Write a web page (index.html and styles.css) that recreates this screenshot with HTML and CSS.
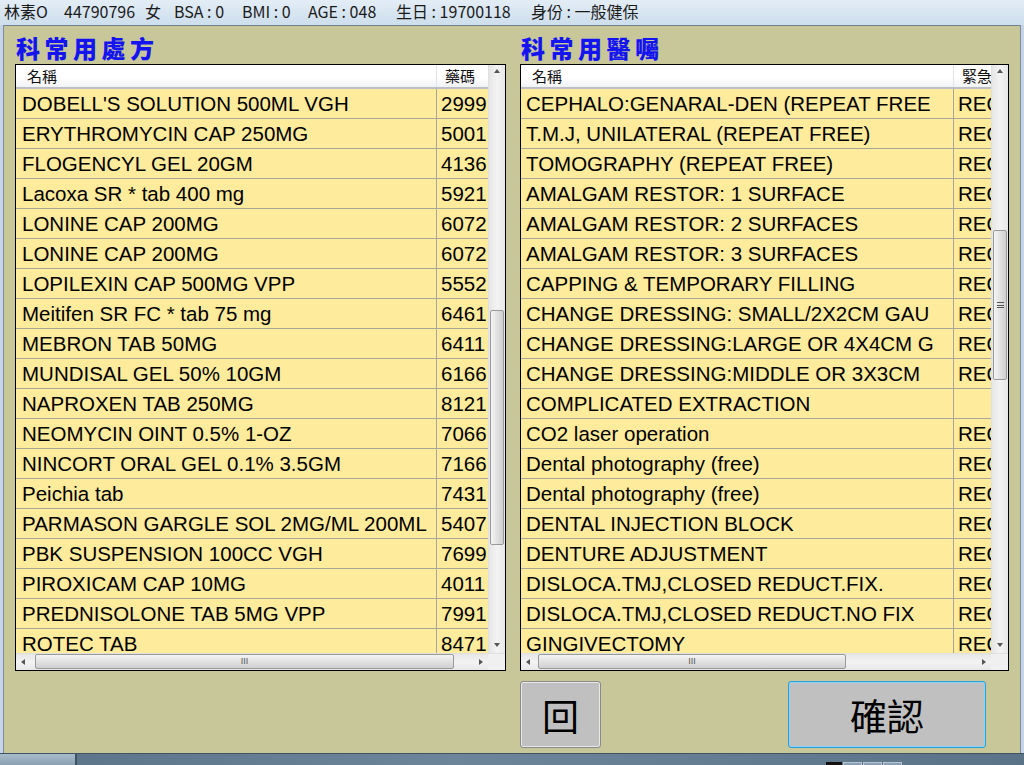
FILE: index.html
```html
<!DOCTYPE html>
<html lang="zh-Hant">
<head>
<meta charset="utf-8">
<title>科常用處方</title>
<link rel="stylesheet" href="styles.css">
</head>
<body>
<div class="topbar">
  <span class="seg s1">林素O</span>
  <span class="seg s2">44790796</span>
  <span class="seg s3">女</span>
  <span class="seg s4">BSA : 0</span>
  <span class="seg s5">BMI : 0</span>
  <span class="seg s6">AGE : 048</span>
  <span class="seg s7">生日 : 19700118</span>
  <span class="seg s8">身份 : 一般健保</span>
</div>
<div class="window">
  <div class="panels">
    <section class="panel panel-left">
      <h2 class="title">科常用處方</h2>
      <div class="listbox">
        <div class="list-main">
          <div class="grid grid-left">
            <div class="hdr"><div class="c1">名稱</div><div class="c2">藥碼</div></div>
            <div class="row"><div class="c1">DOBELL'S SOLUTION 500ML VGH</div><div class="c2">2999</div></div>
            <div class="row"><div class="c1">ERYTHROMYCIN CAP 250MG</div><div class="c2">5001</div></div>
            <div class="row"><div class="c1">FLOGENCYL GEL 20GM</div><div class="c2">4136</div></div>
            <div class="row"><div class="c1">Lacoxa SR * tab 400 mg</div><div class="c2">5921</div></div>
            <div class="row"><div class="c1">LONINE CAP 200MG</div><div class="c2">6072</div></div>
            <div class="row"><div class="c1">LONINE CAP 200MG</div><div class="c2">6072</div></div>
            <div class="row"><div class="c1">LOPILEXIN CAP 500MG VPP</div><div class="c2">5552</div></div>
            <div class="row"><div class="c1">Meitifen SR FC * tab 75 mg</div><div class="c2">6461</div></div>
            <div class="row"><div class="c1">MEBRON TAB 50MG</div><div class="c2">6411</div></div>
            <div class="row"><div class="c1">MUNDISAL GEL 50% 10GM</div><div class="c2">6166</div></div>
            <div class="row"><div class="c1">NAPROXEN TAB 250MG</div><div class="c2">8121</div></div>
            <div class="row"><div class="c1">NEOMYCIN OINT 0.5% 1-OZ</div><div class="c2">7066</div></div>
            <div class="row"><div class="c1">NINCORT ORAL GEL 0.1% 3.5GM</div><div class="c2">7166</div></div>
            <div class="row"><div class="c1">Peichia tab</div><div class="c2">7431</div></div>
            <div class="row"><div class="c1">PARMASON GARGLE SOL 2MG/ML 200ML</div><div class="c2">5407</div></div>
            <div class="row"><div class="c1">PBK SUSPENSION 100CC VGH</div><div class="c2">7699</div></div>
            <div class="row"><div class="c1">PIROXICAM CAP 10MG</div><div class="c2">4011</div></div>
            <div class="row"><div class="c1">PREDNISOLONE TAB 5MG VPP</div><div class="c2">7991</div></div>
            <div class="row"><div class="c1">ROTEC TAB</div><div class="c2">8471</div></div>
          </div>
          <div class="vscroll">
            <div class="arrow up"></div>
            <div class="vtrack"><div class="vthumb vthumb-left"></div></div>
            <div class="arrow down"></div>
          </div>
        </div>
        <div class="hscroll">
          <div class="arrow left"></div>
          <div class="htrack"><div class="hthumb hthumb-left"><span class="grip">III</span></div></div>
          <div class="arrow right"></div>
          <div class="corner"></div>
        </div>
      </div>
    </section>
    <section class="panel panel-right">
      <h2 class="title">科常用醫囑</h2>
      <div class="listbox">
        <div class="list-main">
          <div class="grid grid-right">
            <div class="hdr"><div class="c1">名稱</div><div class="c2">緊急</div></div>
            <div class="row"><div class="c1">CEPHALO:GENARAL-DEN (REPEAT FREE</div><div class="c2">REQ</div></div>
            <div class="row"><div class="c1">T.M.J, UNILATERAL (REPEAT FREE)</div><div class="c2">REQ</div></div>
            <div class="row"><div class="c1">TOMOGRAPHY (REPEAT FREE)</div><div class="c2">REQ</div></div>
            <div class="row"><div class="c1">AMALGAM RESTOR: 1 SURFACE</div><div class="c2">REQ</div></div>
            <div class="row"><div class="c1">AMALGAM RESTOR: 2 SURFACES</div><div class="c2">REQ</div></div>
            <div class="row"><div class="c1">AMALGAM RESTOR: 3 SURFACES</div><div class="c2">REQ</div></div>
            <div class="row"><div class="c1">CAPPING &amp; TEMPORARY FILLING</div><div class="c2">REQ</div></div>
            <div class="row"><div class="c1">CHANGE DRESSING: SMALL/2X2CM GAU</div><div class="c2">REQ</div></div>
            <div class="row"><div class="c1">CHANGE DRESSING:LARGE OR 4X4CM G</div><div class="c2">REQ</div></div>
            <div class="row"><div class="c1">CHANGE DRESSING:MIDDLE OR 3X3CM</div><div class="c2">REQ</div></div>
            <div class="row"><div class="c1">COMPLICATED EXTRACTION</div><div class="c2"></div></div>
            <div class="row"><div class="c1">CO2 laser operation</div><div class="c2">REQ</div></div>
            <div class="row"><div class="c1">Dental photography (free)</div><div class="c2">REQ</div></div>
            <div class="row"><div class="c1">Dental photography (free)</div><div class="c2">REQ</div></div>
            <div class="row"><div class="c1">DENTAL INJECTION BLOCK</div><div class="c2">REQ</div></div>
            <div class="row"><div class="c1">DENTURE ADJUSTMENT</div><div class="c2">REQ</div></div>
            <div class="row"><div class="c1">DISLOCA.TMJ,CLOSED REDUCT.FIX.</div><div class="c2">REQ</div></div>
            <div class="row"><div class="c1">DISLOCA.TMJ,CLOSED REDUCT.NO FIX</div><div class="c2">REQ</div></div>
            <div class="row"><div class="c1">GINGIVECTOMY</div><div class="c2">REQ</div></div>
          </div>
          <div class="vscroll">
            <div class="arrow up"></div>
            <div class="vtrack"><div class="vthumb vthumb-right"><span class="vgrip"></span></div></div>
            <div class="arrow down"></div>
          </div>
        </div>
        <div class="hscroll">
          <div class="arrow left"></div>
          <div class="htrack"><div class="hthumb hthumb-right"><span class="grip">III</span></div></div>
          <div class="arrow right"></div>
          <div class="corner"></div>
        </div>
      </div>
      <div class="buttons">
        <button class="btn btn-back">回</button>
        <button class="btn btn-ok">確認</button>
      </div>
    </section>
  </div>
</div>
<div class="taskbar">
  <div class="task-start"></div>
  <div class="task-main">
    <div class="tray">
      <span class="tray-sq dark"></span><span class="tray-sq"></span><span class="tray-sq"></span><span class="tray-sq"></span>
    </div>
  </div>
</div>
</body>
</html>
```

FILE: styles.css
```css
* { box-sizing: border-box; }
html, body { margin: 0; padding: 0; }
body {
  width: 1024px;
  height: 765px;
  overflow: hidden;
  background: #c4d6e6;
  font-family: "Liberation Sans", Arial, sans-serif;
}
.topbar {
  height: 25px;
  padding: 0 0 0 4px;
  display: flex;
  white-space: pre;
  font-family: "Noto Sans CJK TC", "Liberation Sans", sans-serif;
  font-size: 16px;
  line-height: 22px;
  color: #1a1a1a;
  background: linear-gradient(#e3edf6, #cddeec);
}
.seg { flex: none; }
.s1 { width: 60px; }
.s2 { width: 81px; }
.s3 { width: 29px; }
.s4 { width: 68px; }
.s5 { width: 66px; }
.s6 { width: 88px; }
.s7 { width: 135px; }
.window {
  height: 728px;
  margin: 0 3px 0 3px;
  background: #c8c79a;
  border-top: 1px solid #6f7f8e;
  border-left: 1px solid #7d8d9b;
  border-right: 1px solid #7d8d9b;
}
.panels {
  display: flex;
  padding-left: 11px;
  gap: 14px;
}
.panel-left { width: 491px; }
.panel-right { width: 489px; }
.title {
  margin: 0;
  height: 38px;
  padding: 8px 0 0 1px;
  font-family: "Noto Sans CJK TC", sans-serif;
  font-weight: 900;
  font-size: 24px;
  line-height: 27px;
  letter-spacing: 4.5px;
  color: #1414f0;
}
.listbox {
  height: 607px;
  border: 1px solid #000;
  background: #fff;
  display: flex;
  flex-direction: column;
}
.list-main {
  height: 588px;
  display: flex;
}
.grid {
  flex: 1;
  overflow: hidden;
  background: #fff;
}
.hdr, .row { display: flex; }
.hdr {
  height: 24px;
  background: linear-gradient(#ffffff 0%, #ffffff 55%, #f1f2f4 100%);
  border-bottom: 2px solid #b9bec6;
  font-family: "Noto Sans CJK TC", sans-serif;
  font-size: 15px;
  line-height: 21px;
  color: #111;
}
.hdr .c1 { padding-left: 11px; border-right: 1px solid #e2e4e8; }
.hdr .c2 { padding-left: 8px; }
.row {
  height: 30px;
  background: #feeb9c;
  border-bottom: 1px solid #a8a59a;
  font-size: 20.5px;
  line-height: 30px;
  color: #000;
}
.c1, .c2 { white-space: nowrap; overflow: hidden; }
.row .c1 { padding-left: 6px; border-right: 1px solid #a8a59a; }
.row .c2 { padding-left: 4px; }
.grid-right .row .c1 { padding-left: 5px; }
.grid-left .c1 { width: 421px; flex: none; }
.grid-left .c2 { flex: 1; }
.grid-right .c1 { width: 433px; flex: none; }
.grid-right .c2 { flex: 1; }

.vscroll {
  width: 17px;
  flex: none;
  display: flex;
  flex-direction: column;
  background: linear-gradient(90deg, #e6e6e6, #f3f3f3 50%, #e8e8e8);
  border-left: 1px solid #e0e0e0;
}
.vtrack { flex: 1; }
.vthumb {
  margin-left: 1px;
  width: 14px;
  border: 1px solid #9a9a9a;
  border-radius: 2px;
  background: linear-gradient(90deg, #f4f4f4, #e2e2e2 50%, #cfcfcf);
  display: flex;
  align-items: center;
  justify-content: center;
}
.vthumb-left { margin-top: 228px; height: 235px; }
.vthumb-right { margin-top: 148px; height: 150px; }
.vgrip {
  width: 7px;
  height: 6px;
  border-top: 1px solid #555;
  border-bottom: 1px solid #555;
  position: relative;
}
.vgrip::after {
  content: "";
  position: absolute;
  left: 0; right: 0; top: 2px;
  border-top: 1px solid #555;
}
.arrow {
  flex: none;
  width: 17px;
  height: 17px;
  position: relative;
}
.arrow::after {
  content: "";
  position: absolute;
  width: 0; height: 0;
  border: 3px solid transparent;
}
.arrow.up::after { left: 5px; top: 4px; border-bottom: 4px solid #555; border-top: 0; }
.arrow.down::after { left: 5px; top: 7px; border-top: 4px solid #555; border-bottom: 0; }
.arrow.left::after { left: 5px; top: 5px; border-right: 4px solid #555; border-left: 0; }
.arrow.right::after { left: 8px; top: 5px; border-left: 4px solid #555; border-right: 0; }

.hscroll {
  height: 17px;
  display: flex;
  background: linear-gradient(#e6e6e6, #f3f3f3 50%, #e8e8e8);
  border-top: 1px solid #e0e0e0;
}
.htrack { flex: 1; display: flex; }
.hthumb {
  height: 15px;
  border: 1px solid #9a9a9a;
  border-radius: 2px;
  background: linear-gradient(#f4f4f4, #e2e2e2 50%, #cfcfcf);
  display: flex;
  align-items: center;
  justify-content: center;
}
.hthumb-left { margin-left: 2px; width: 419px; }
.hthumb-right { margin-left: 0px; width: 308px; }
.grip {
  font-family: "Liberation Sans", sans-serif;
  font-size: 9px;
  line-height: 9px;
  color: #555;
}
.corner { width: 17px; background: #f0f0f0; }

.buttons {
  display: flex;
  justify-content: space-between;
  padding: 10px 23px 0 0;
}
.btn {
  height: 67px;
  border: 1px solid #8a8a8a;
  border-radius: 3px;
  background: #c0c0c0;
  font-family: "Noto Sans CJK TC", serif;
  font-size: 37px;
  color: #000;
  padding: 0;
  box-shadow: inset 0 0 0 1px #e8e8e8;
}
.btn-back { width: 81px; }
.btn-ok {
  width: 198px;
  border: 1px solid #2a9fd8;
  box-shadow: inset 0 0 0 1px #8fd3f4;
}

.taskbar {
  height: 12px;
  display: flex;
  border-top: 1px solid #3e5366;
  background: #587287;
}
.task-start {
  width: 77px;
  background: linear-gradient(#a9bcca, #8aa1b3);
  border-right: 2px solid #3e5366;
}
.task-main {
  flex: 1;
  background: linear-gradient(90deg, #5d7689, #6d8598 40%, #5b7386);
  display: flex;
  justify-content: flex-end;
  padding-right: 122px;
}
.tray { display: flex; gap: 1px; padding-top: 8px; }
.tray-sq { width: 19px; height: 5px; background: #8aa0b2; border: 1px solid #b7c6d2; }
.tray-sq.dark { width: 16px; background: #111; border-color: #111; }
```
